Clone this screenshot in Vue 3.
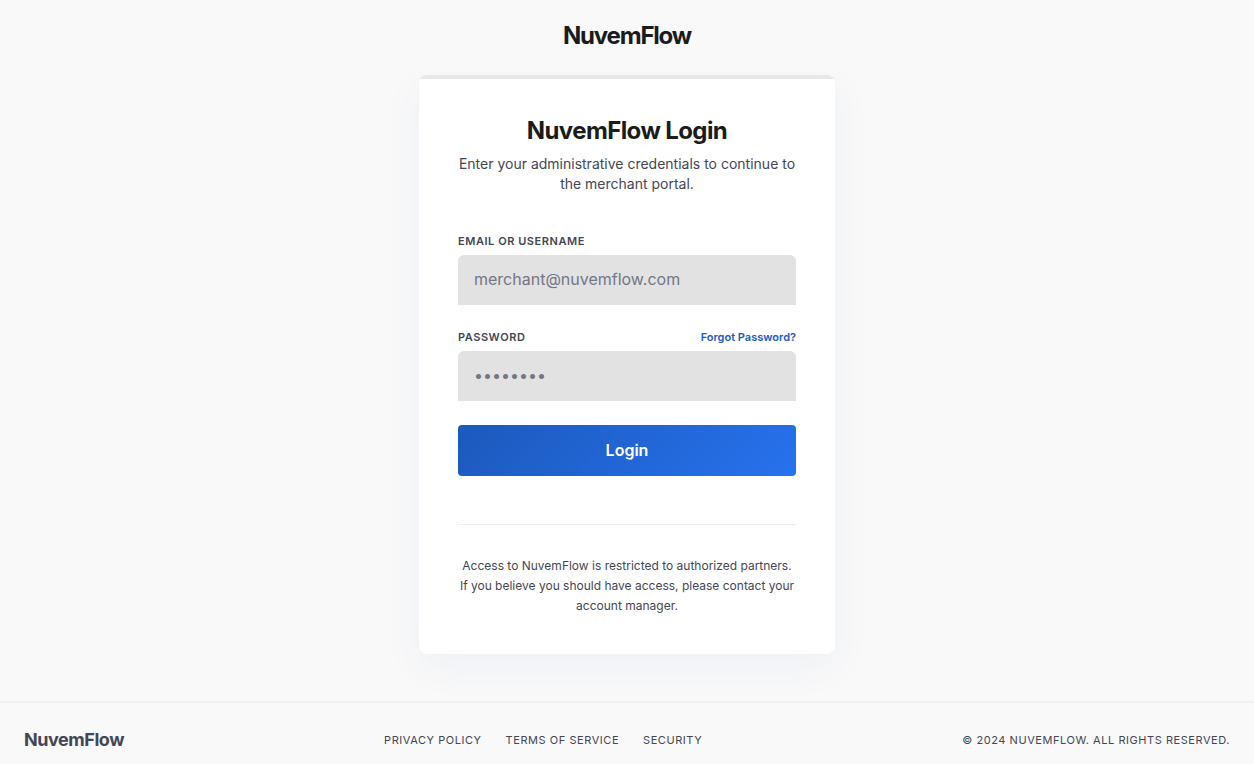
<script setup>
import { ref } from 'vue'

const email = ref('')
const password = ref('')
const links = ['Privacy Policy', 'Terms of Service', 'Security']
</script>

<template>
  <div class="page">
    <header class="top">
      <div class="brand">NuvemFlow</div>
    </header>

    <main class="main">
      <section class="card">
        <div class="intro">
          <h1>NuvemFlow Login</h1>
          <p>Enter your administrative credentials to continue to the merchant portal.</p>
        </div>

        <form class="form" @submit.prevent>
          <div class="field">
            <label for="email">Email or Username</label>
            <input id="email" v-model="email" type="text" placeholder="merchant@nuvemflow.com" />
          </div>
          <div class="field">
            <div class="label-row">
              <label for="password">Password</label>
              <a href="#" class="forgot">Forgot Password?</a>
            </div>
            <input id="password" v-model="password" type="password" placeholder="••••••••" />
          </div>
          <button type="submit" class="submit">Login</button>
        </form>

        <p class="note">
          Access to NuvemFlow is restricted to authorized partners. If you believe you should have
          access, please contact your account manager.
        </p>
      </section>
    </main>

    <footer class="footer">
      <div class="footer-brand">NuvemFlow</div>
      <nav class="links">
        <a v-for="link in links" :key="link" href="#">{{ link }}</a>
      </nav>
      <div class="copyright">© 2024 NuvemFlow. All rights reserved.</div>
    </footer>
  </div>
</template>

<style>
body {
  margin: 0;
  background: #f9f9f9;
}
</style>

<style scoped>
.page {
  display: flex;
  flex-direction: column;
  min-height: 100vh;
  background: #f9f9f9;
  color: #1a1c1c;
  font-family: Inter, "Liberation Sans", sans-serif;
}

.page * {
  box-sizing: border-box;
}

.top {
  z-index: 1;
  padding: 20px 24px;
  background: #f9f9f9;
  text-align: center;
}

.brand {
  font-size: 24px;
  line-height: 32px;
  font-weight: 700;
  letter-spacing: -0.05em;
}

.main {
  flex: 1;
  display: flex;
  justify-content: center;
  align-items: flex-start;
  padding: 3px 24px 47px;
}

.card {
  width: 100%;
  max-width: 416px;
  padding: 40px 39px 38px;
  border-radius: 8px;
  background: linear-gradient(#e8e8e8 4px, #ffffff 4px);
  box-shadow: 0 12px 40px rgba(0, 71, 171, 0.05);
}

.intro {
  text-align: center;
}

h1 {
  margin: 0 0 7px;
  font-size: 24px;
  line-height: 32px;
  font-weight: 700;
  letter-spacing: -0.025em;
}

p {
  margin: 0;
  color: #434654;
}

.intro p {
  font-size: 14px;
  line-height: 20px;
}

.form {
  display: flex;
  flex-direction: column;
  gap: 24px;
  margin-top: 39px;
}

.field {
  display: flex;
  flex-direction: column;
  gap: 6px;
}

.label-row {
  display: flex;
  justify-content: space-between;
  align-items: center;
}

label {
  color: #434654;
  font-size: 11px;
  line-height: 16px;
  font-weight: 600;
  letter-spacing: 0.05em;
  text-transform: uppercase;
}

.forgot {
  color: #1d59c1;
  font-size: 11px;
  line-height: 16px;
  font-weight: 600;
  text-decoration: none;
}

input {
  width: 100%;
  height: 50px;
  padding: 0 16px 2px;
  border: 0;
  border-radius: 6px 6px 0 0;
  background: #e2e2e2;
  color: #1a1c1c;
  font-family: inherit;
  font-size: 16px;
}

input::placeholder {
  color: #737685;
  opacity: 1;
}

.submit {
  height: 51px;
  padding: 0 16px 2px;
  border: 0;
  border-radius: 4px;
  background: linear-gradient(135deg, #1c59bc 0%, #2772ee 100%);
  color: #ffffff;
  font-family: inherit;
  font-size: 16px;
  font-weight: 600;
  cursor: pointer;
}

.note {
  margin-top: 48px;
  padding-top: 31px;
  border-top: 1px solid #eeeeee;
  text-align: center;
  font-size: 12px;
  line-height: 20px;
}

.footer {
  z-index: 1;
  display: flex;
  justify-content: space-between;
  align-items: center;
  padding: 23px 24px 10px;
  border-top: 2px solid #f1f1f1;
  background: #f9f9f9;
  color: #434654;
}

.footer-brand {
  font-size: 18px;
  line-height: 28px;
  font-weight: 700;
  letter-spacing: -0.025em;
}

.links {
  display: flex;
  gap: 24px;
}

.links a,
.copyright {
  color: #434654;
  font-size: 11px;
  line-height: 16px;
  letter-spacing: 0.05em;
  text-transform: uppercase;
  text-decoration: none;
}
</style>
